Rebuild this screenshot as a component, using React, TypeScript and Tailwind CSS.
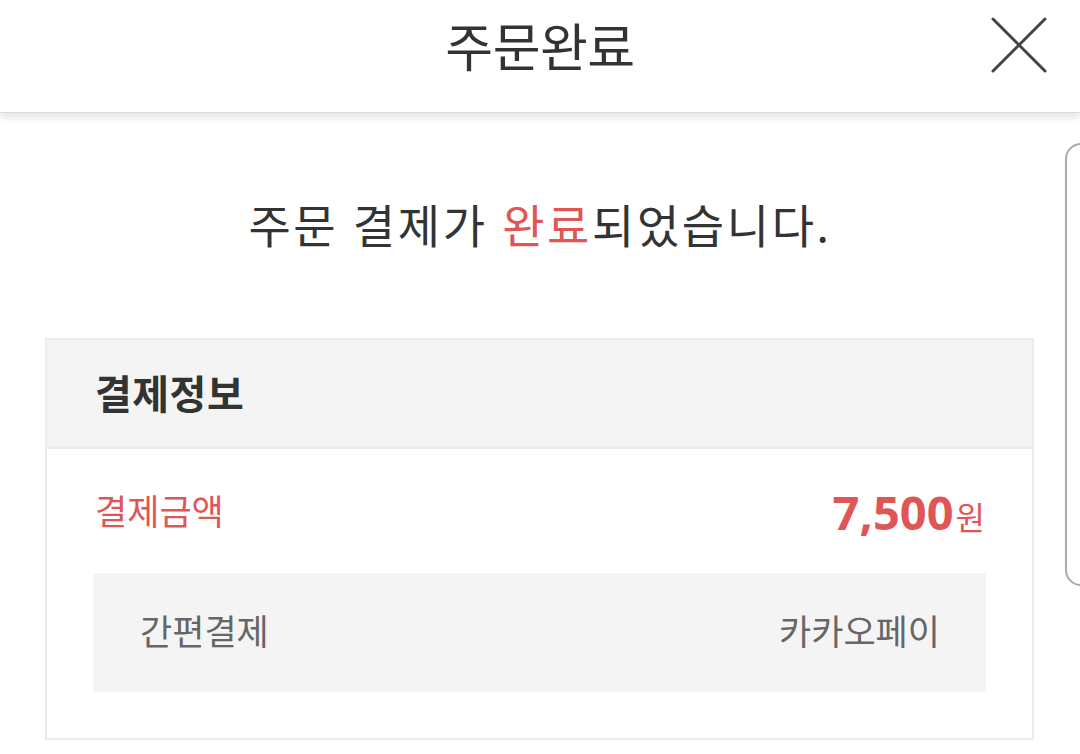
import React from "react";

export default function App() {
  const font = { fontFamily: '"Noto Sans", "Noto Sans CJK KR", sans-serif' };
  return (
    <div
      className="relative w-[1080px] h-[754px] overflow-hidden bg-white"
      style={font}
    >
      {/* header */}
      <div className="relative h-[113px] flex items-start justify-center pt-[10px] border-b border-[#dcdcdc] shadow-[0_5px_8px_rgba(0,0,0,0.10)] bg-white z-10">
        <h1 className="text-[52px] leading-[74px] text-[#333] font-normal tracking-[-0.5px]">
          주문완료
        </h1>
        <button className="absolute right-[33px] top-[17px] w-[56px] h-[56px]">
          <svg viewBox="0 0 56 56" width="56" height="56">
            <path
              d="M2 2 L54 54 M54 2 L2 54"
              stroke="#444"
              strokeWidth="3"
              strokeLinecap="round"
            />
          </svg>
        </button>
      </div>

      {/* right pill */}
      <div className="absolute left-[1065px] top-[143px] w-[40px] h-[443px] rounded-[16px] border-2 border-[#aaa] bg-white" />

      {/* message */}
      <div className="flex justify-center pt-[80px]">
        <p className="text-[46px] leading-[64px] text-[#333] tracking-[2.6px]">
          주문 결제가 <span className="text-[#e05656]">완료</span>되었습니다.
        </p>
      </div>

      {/* card */}
      <div className="ml-[45px] mt-[81px] w-[989px] border-2 border-[#ececec]">
        <div className="h-[109px] bg-[#f4f4f4] border-b-2 border-[#ececec] flex items-center pl-[48px]">
          <h2 className="text-[40px] font-bold text-[#333] tracking-[0.5px]">
            결제정보
          </h2>
        </div>
        <div className="pt-[31px] pb-[46px] px-[46px]">
          <div className="flex items-center justify-between h-[64px] pl-[2px] pr-[1px]">
            <span className="text-[35px] text-[#e05656]">결제금액</span>
            <span className="flex items-baseline text-[#e05656]">
              <span className="text-[47px] font-bold tracking-[0px]">7,500</span>
              <span className="text-[32px] ml-[2px]">원</span>
            </span>
          </div>
          <div className="mt-[29px] h-[119px] bg-[#f4f4f4] flex items-center justify-between pl-[47px] pr-[46px]">
            <span className="text-[35px] text-[#666]">간편결제</span>
            <span className="text-[35px] text-[#666]">카카오페이</span>
          </div>
        </div>
      </div>
    </div>
  );
}
